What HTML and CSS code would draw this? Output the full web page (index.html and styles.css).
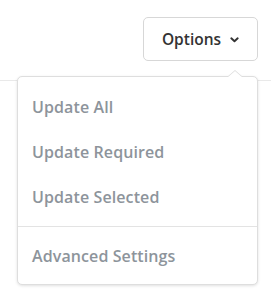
FILE: index.html
```html
<!DOCTYPE html>
<html>
<head>
<meta charset="utf-8">
<link rel="stylesheet" href="styles.css">
</head>
<body>
<div class="page">
  <header class="toolbar">
    <button class="options-btn">Options <svg class="chev" width="9" height="6" viewBox="0 0 9 6"><path d="M1.3 1.3 L4.5 4.3 L7.7 1.3" fill="none" stroke="#333" stroke-width="1.9" stroke-linecap="round" stroke-linejoin="round"/></svg></button>
  </header>
  <div class="menu">
    <a class="menu-item">Update All</a>
    <a class="menu-item">Update Required</a>
    <a class="menu-item">Update Selected</a>
    <div class="menu-sep"></div>
    <a class="menu-item">Advanced Settings</a>
  </div>
</div>
</body>
</html>
```
FILE: styles.css
```css
html, body {
  margin: 0;
  padding: 0;
  background: #fff;
}
body {
  font-family: "Open Sans", Lato, sans-serif;
  width: 271px;
  height: 299px;
  overflow: hidden;
}
.page {
  position: relative;
  height: 299px;
}
.toolbar {
  height: 81px;
  box-sizing: border-box;
  border-bottom: 1px solid #e9e9e9;
  display: flex;
  justify-content: flex-end;
  align-items: flex-start;
  padding: 17px 13px 0 0;
}
.options-btn {
  width: 115px;
  height: 44px;
  box-sizing: border-box;
  border: 1px solid #d7d7d7;
  border-radius: 5px;
  background: #fff;
  font-family: "Open Sans", Lato, sans-serif;
  font-weight: 600;
  font-size: 15.5px;
  color: #333;
  display: flex;
  align-items: center;
  justify-content: center;
  gap: 9px;
  padding: 0 0 1px 0;
}
.chev {
  display: block;
  margin-top: 3px;
}
.menu {
  position: absolute;
  left: 17px;
  top: 76px;
  width: 241px;
  height: 209px;
  box-sizing: border-box;
  background: #fff;
  border: 1px solid #dedede;
  border-radius: 5px;
  box-shadow: 0 1px 3px rgba(0,0,0,0.12);
  padding: 7px 0 6px;
}
.menu::before,
.menu::after {
  content: "";
  position: absolute;
  right: 14px;
  width: 0;
  height: 0;
  border-left: 8px solid transparent;
  border-right: 8px solid transparent;
}
.menu::before {
  top: -7px;
  border-bottom: 7px solid #dedede;
}
.menu::after {
  top: -6px;
  border-bottom: 7px solid #fff;
}
.menu-item {
  display: flex;
  align-items: center;
  height: 45px;
  padding: 1px 0 0 14px;
  box-sizing: border-box;
  font-size: 16px;
  font-weight: 600;
  letter-spacing: 0.1px;
  color: #8d949b;
}
.menu-sep {
  height: 1px;
  background: #e3e3e3;
  margin: 7px 0 6px;
}
```
